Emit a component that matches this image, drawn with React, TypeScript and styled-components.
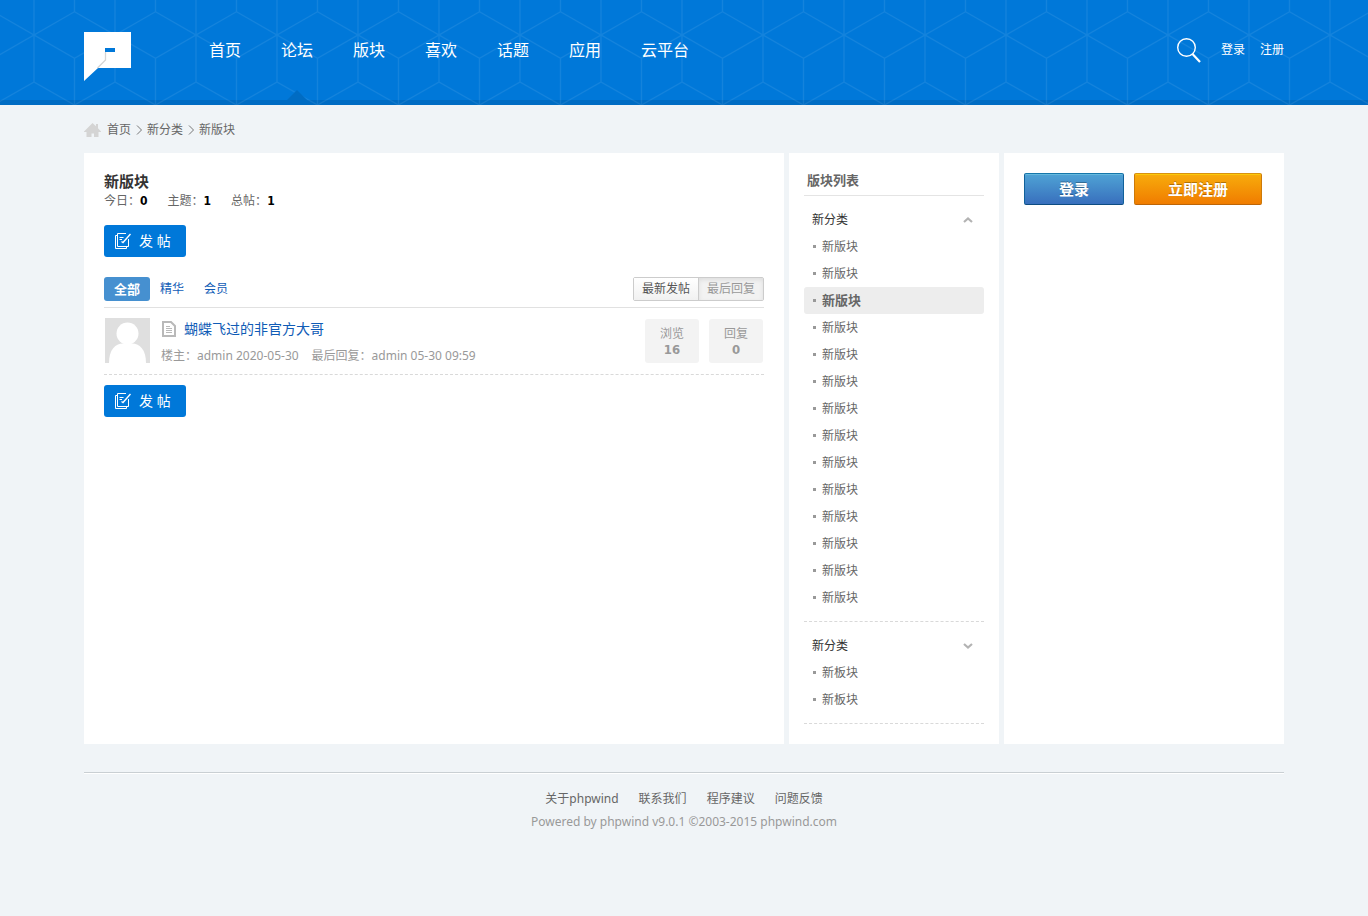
import React from 'react';
import styled, { createGlobalStyle, css } from 'styled-components';

const GlobalStyle = createGlobalStyle`
  * { box-sizing: border-box; }
  body {
    margin: 0;
    background: #f0f4f7;
    color: #666;
    font: 12px/18px "Noto Sans", "Noto Sans CJK SC", sans-serif;
  }
  a { color: inherit; text-decoration: none; }
  button { font: inherit; cursor: pointer; border: 0; padding: 0; margin: 0; }
  strong { font-family: "DejaVu Sans Condensed", sans-serif; }
  h1, h2, h3, ul, p { margin: 0; padding: 0; }
  ul { list-style: none; }
  svg { display: block; flex: none; }
`;

const Wrap = styled.div`
  width: calc(100% - 40px);
  max-width: 1200px;
  margin: 0 auto;
`;

/* ---------- header ---------- */

const Header = styled.header`
  position: relative;
  height: 105px;
  background: #0078d9;
  border-bottom: 5px solid #006cc3;
  color: #fff;
`;

const Backdrop = styled.svg`
  position: absolute;
  top: 0;
  left: 0;
  width: 100%;
  height: 105px;
`;

const HeaderRow = styled(Wrap)`
  position: relative;
  display: flex;
  align-items: center;
  height: 100px;
`;

const LogoLink = styled.a`
  margin: 12px 58px 0 0;
`;

const NavList = styled.ul`
  display: flex;
  flex: 1;
`;

const NavLink = styled.a<{ $active?: boolean }>`
  position: relative;
  display: block;
  padding: 0 20px;
  font-size: 16px;
  line-height: 100px;
  ${(p) =>
    p.$active &&
    css`
      &::after {
        content: '';
        position: absolute;
        left: calc(50% - 10px);
        bottom: 0;
        border: 10px solid transparent;
        border-top-width: 0;
        border-bottom-color: #006cc3;
      }
    `}
`;

const SearchButton = styled.button`
  margin-right: 20px;
  background: none;
  color: #fff;
`;

const AccountLinks = styled.div`
  display: flex;
  gap: 15px;
`;

/* ---------- breadcrumb ---------- */

const Crumbs = styled.nav`
  display: flex;
  align-items: center;
  gap: 5px;
  height: 48px;
  padding-top: 2px;
`;

/* ---------- panels ---------- */

const Columns = styled.div`
  display: flex;
  gap: 5px;
`;

const Main = styled.main`
  flex: 1;
  min-width: 0;
  padding: 20px;
  background: #fff;
`;

const Sidebar = styled.aside<{ $width: number; $pad: number }>`
  flex: none;
  width: ${(p) => p.$width}px;
  padding: 20px ${(p) => p.$pad}px;
  background: #fff;
`;

const ForumTitle = styled.h1`
  color: #333;
  font-size: 15px;
  line-height: 16px;
`;

const Totals = styled.p`
  display: flex;
  gap: 20px;
  margin-bottom: 12px;
  line-height: 24px;
  strong { color: #000; }
`;

const PostButton = styled.button`
  display: flex;
  align-items: center;
  gap: 8px;
  width: 82px;
  height: 32px;
  padding-left: 11px;
  border-radius: 3px;
  background: #0078d9;
  color: #fff;
  font-size: 14px;
  font-weight: 400;
`;

const FilterBar = styled.div`
  display: flex;
  align-items: center;
  justify-content: space-between;
  margin-top: 20px;
  padding-bottom: 6px;
  border-bottom: 1px solid #e1e1e1;
`;

const Filters = styled.div`
  display: flex;
`;

const Filter = styled.a<{ $active?: boolean }>`
  padding: 0 10px;
  color: #105cb6;
  line-height: 24px;
  ${(p) =>
    p.$active &&
    css`
      border-radius: 3px;
      background: #4690d0;
      color: #fff;
      font-size: 13px;
      font-weight: 700;
    `}
`;

const SortGroup = styled.div`
  display: flex;
  border: 1px solid #ccc;
  border-radius: 2px;
`;

const SortButton = styled.button<{ $pressed?: boolean }>`
  height: 22px;
  padding: 0 8px;
  color: ${(p) => (p.$pressed ? '#999' : '#555')};
  background: ${(p) => (p.$pressed ? '#f2f2f2' : 'linear-gradient(#fff, #f1f1f1)')};
  box-shadow: ${(p) => (p.$pressed ? 'inset 0 2px 4px #ddd' : 'none')};
  & + & { border-left: 1px solid #ccc; }
`;

const Thread = styled.article`
  display: flex;
  align-items: flex-start;
  margin-bottom: 10px;
  padding: 10px 1px;
  border-bottom: 1px dashed #d9d9d9;
`;

const ThreadText = styled.div`
  flex: 1;
  padding-left: 11px;
`;

const ThreadTitle = styled.h2`
  display: flex;
  align-items: center;
  gap: 8px;
  padding-left: 1px;
  color: #105cb6;
  font-size: 14px;
  font-weight: 400;
  line-height: 22px;
`;

const ThreadMeta = styled.p`
  display: flex;
  gap: 13px;
  padding-top: 8px;
  color: #999;
  line-height: 16px;
`;

const Counters = styled.div`
  display: flex;
  gap: 10px;
  padding-top: 1px;
`;

const Counter = styled.div`
  display: flex;
  flex-direction: column;
  width: 54px;
  padding: 7px 0 5px;
  border-radius: 3px;
  background: #f3f3f3;
  color: #999;
  line-height: 16px;
  text-align: center;
  strong { font-size: 13px; }
`;

/* ---------- forum list ---------- */

const ListTitle = styled.h2`
  padding: 0 3px 8px;
  border-bottom: 1px solid #e4e4e4;
  font-size: 13px;
  line-height: 14px;
`;

const ForumGroup = styled.section`
  padding: 10px 0;
  border-bottom: 1px dashed #d9d9d9;
`;

const GroupTitle = styled.h3`
  display: flex;
  align-items: center;
  justify-content: space-between;
  padding: 0 11px 0 8px;
  color: #333;
  font-size: 12px;
  font-weight: 400;
  line-height: 27px;
`;

const ForumLink = styled.a<{ $active?: boolean }>`
  display: flex;
  align-items: center;
  gap: 6px;
  padding-left: 9px;
  border-radius: 3px;
  line-height: 27px;
  ${(p) => p.$active && css`
    background: #ededed;
    font-size: 13px;
    font-weight: 700;
  `}
  &::before {
    content: '';
    width: 3px;
    height: 3px;
    background: #999;
  }
`;

/* ---------- account buttons ---------- */

const AccountButtons = styled.div`
  display: flex;
  gap: 10px;
`;

const AccountButton = styled.button<{ $kind: 'login' | 'register' }>`
  width: ${(p) => (p.$kind === 'login' ? 100 : 128)}px;
  height: 32px;
  border: 1px solid;
  border-radius: 2px;
  color: #fff;
  font-size: 15px;
  font-weight: 700;
  text-shadow: 0 -1px 0 rgba(0, 0, 0, 0.3);
  ${(p) =>
    p.$kind === 'login'
      ? css`
          border-color: #1677ab #11619a #0d4c82;
          background: linear-gradient(#4fa3d5, #386fbd);
          box-shadow: inset 0 1px 0 #66b9dd;
        `
      : css`
          border-color: #d9920e #cc7a0a #bd6507;
          background: linear-gradient(#f8ac0c, #f07c00);
          box-shadow: inset 0 1px 0 #fbc90b;
        `}
`;

/* ---------- footer ---------- */

const Footer = styled(Wrap).attrs({ as: 'footer' })`
  margin-top: 28px;
  padding: 17px 0 20px;
  border-top: 1px solid #c9cfd3;
  box-shadow: inset 0 1px 0 #fff;
  color: #999;
  text-align: center;
`;

const FooterLinks = styled.div`
  display: flex;
  justify-content: center;
  gap: 20px;
  margin-bottom: 5px;
  color: #666;
`;

/* ---------- drawings ---------- */

const HexBackdrop = () => (
  <Backdrop aria-hidden="true">
    <defs>
      <pattern id="hex" x="34" y="35" width="81" height="140" patternUnits="userSpaceOnUse">
        <path
          d="M0 0V47L40.500 70L81 47V0L40.500 23.300L0 0M40.500 23.300V116.700L0 140M40.500 116.700L81 140M0 93V140M0 93L40.500 70L81 93V140"
          fill="none"
          stroke="#fff"
          strokeOpacity=".08"
          strokeWidth="1.300"
        />
      </pattern>
    </defs>
    <rect width="100%" height="105" fill="url(#hex)" />
  </Backdrop>
);

const Logo = () => (
  <svg width="47" height="49" viewBox="0 0 47 49">
    <path d="M0 0H47V36H14L0 49Z" fill="#fff" />
    <path d="M21.500 20V28L13.500 36" fill="none" stroke="#d4d4d4" strokeWidth="1.300" />
    <path d="M21 16H31V20H21Z" fill="#0078d9" />
  </svg>
);

const SearchIcon = () => (
  <svg width="24" height="25" viewBox="0 0 24 25" fill="none" stroke="currentColor">
    <circle cx="9.500" cy="9.500" r="8.800" strokeWidth="1.400" />
    <path d="M15.500 16L23 24" strokeWidth="2.200" />
  </svg>
);

const HomeIcon = () => (
  <svg width="18" height="15" viewBox="0 0 18 15" fill="#d4d4d4">
    <path d="M8.500 0L12 3.300V1H14V5.200L17 8.500V9H14.500V14H10V10.500H7.500V14H2.500V9H0V8.500Z" />
  </svg>
);

const CrumbArrow = () => (
  <svg width="6" height="10" viewBox="0 0 6 10" fill="none" stroke="#777">
    <path d="M1 .5L5.500 5L1 9.500" />
  </svg>
);

const PostIcon = () => (
  <svg width="16" height="16" viewBox="0 0 16 16" fill="none" stroke="#fff">
    <path d="M11 .5H2.500V13.500H13.500V6M2.500 2.500H.5V15.500H11.500V13.500" />
    <path d="M4.500 4.500H8.500M4.500 6.500H7" />
    <path d="M6.500 8.500L8 9.500L15.500 1" strokeWidth="1.400" />
  </svg>
);

const PageIcon = () => (
  <svg width="14" height="16" viewBox="0 0 14 16" fill="none" stroke="#b9b9b9">
    <path d="M1 1H9L13 5V15H1Z" strokeWidth="2" />
    <path d="M4 5.500H8M4 7.500H10M4 9.500H10M4 11.500H10" />
  </svg>
);

const Avatar = () => (
  <svg width="45" height="45" viewBox="0 0 45 45" role="img" aria-label="admin">
    <path d="M0 0H45V45H0Z" fill="#dfdfdf" />
    <circle cx="22.500" cy="15.500" r="11" fill="#fff" />
    <path d="M4 45C4 32 10 25.500 18 25.500H27C35 25.500 41 32 41 45Z" fill="#fff" />
  </svg>
);

const Chevron = ({ up }: { up?: boolean }) => (
  <svg width="10" height="6" viewBox="0 0 10 6" fill="none" stroke="#b3b3b3" strokeWidth="2.200">
    <path d={up ? 'M1 5L5 1.500L9 5' : 'M1 1L5 4.500L9 1'} />
  </svg>
);

/* ---------- data ---------- */

const NAV = ['首页', '论坛', '版块', '喜欢', '话题', '应用', '云平台'];
const TOTALS = [['今日', 0], ['主题', 1], ['总帖', 1]] as const;
const GROUPS = [
  { open: true, active: 2, forums: Array<string>(14).fill('新版块') },
  { open: false, active: -1, forums: ['新板块', '新板块'] },
];

const NewPost = () => (
  <PostButton type="button">
    <PostIcon />
    发 帖
  </PostButton>
);

export default function App() {
  return (
    <>
      <GlobalStyle />
      <Header>
        <HexBackdrop />
        <HeaderRow>
          <LogoLink href="#" aria-label="phpwind">
            <Logo />
          </LogoLink>
          <NavList>
            {NAV.map((name) => (
              <li key={name}>
                <NavLink href="#" $active={name === '论坛'}>{name}</NavLink>
              </li>
            ))}
          </NavList>
          <SearchButton type="button" aria-label="搜索">
            <SearchIcon />
          </SearchButton>
          <AccountLinks>
            <a href="#">登录</a>
            <a href="#">注册</a>
          </AccountLinks>
        </HeaderRow>
      </Header>

      <Wrap>
        <Crumbs>
          <HomeIcon />
          <a href="#">首页</a>
          <CrumbArrow />
          <a href="#">新分类</a>
          <CrumbArrow />
          <a href="#">新版块</a>
        </Crumbs>

        <Columns>
          <Main>
            <ForumTitle>新版块</ForumTitle>
            <Totals>
              {TOTALS.map(([label, value]) => (
                <span key={label}>{label}：<strong>{value}</strong></span>
              ))}
            </Totals>
            <NewPost />
            <FilterBar>
              <Filters>
                <Filter href="#" $active>全部</Filter>
                <Filter href="#">精华</Filter>
                <Filter href="#">会员</Filter>
              </Filters>
              <SortGroup>
                <SortButton type="button">最新发帖</SortButton>
                <SortButton type="button" $pressed>最后回复</SortButton>
              </SortGroup>
            </FilterBar>
            <Thread>
              <Avatar />
              <ThreadText>
                <ThreadTitle>
                  <PageIcon />
                  <a href="#">蝴蝶飞过的非官方大哥</a>
                </ThreadTitle>
                <ThreadMeta>
                  <span>楼主：admin&nbsp;2020-05-30</span>
                  <span>最后回复：admin&nbsp;05-30 09:59</span>
                </ThreadMeta>
              </ThreadText>
              <Counters>
                <Counter>浏览<strong>16</strong></Counter>
                <Counter>回复<strong>0</strong></Counter>
              </Counters>
            </Thread>
            <NewPost />
          </Main>

          <Sidebar $width={210} $pad={15}>
            <ListTitle>版块列表</ListTitle>
            {GROUPS.map((group, g) => (
              <ForumGroup key={g}>
                <GroupTitle>
                  新分类
                  <Chevron up={group.open} />
                </GroupTitle>
                <ul>
                  {group.forums.map((name, i) => (
                    <li key={i}>
                      <ForumLink href="#" $active={i === group.active}>{name}</ForumLink>
                    </li>
                  ))}
                </ul>
              </ForumGroup>
            ))}
          </Sidebar>

          <Sidebar $width={280} $pad={20}>
            <AccountButtons>
              <AccountButton type="button" $kind="login">登录</AccountButton>
              <AccountButton type="button" $kind="register">立即注册</AccountButton>
            </AccountButtons>
          </Sidebar>
        </Columns>
      </Wrap>

      <Footer>
        <FooterLinks>
          <a href="#">关于phpwind</a>
          <a href="#">联系我们</a>
          <a href="#">程序建议</a>
          <a href="#">问题反馈</a>
        </FooterLinks>
        <p>Powered by phpwind v9.0.1 ©2003-2015 phpwind.com</p>
      </Footer>
    </>
  );
}
